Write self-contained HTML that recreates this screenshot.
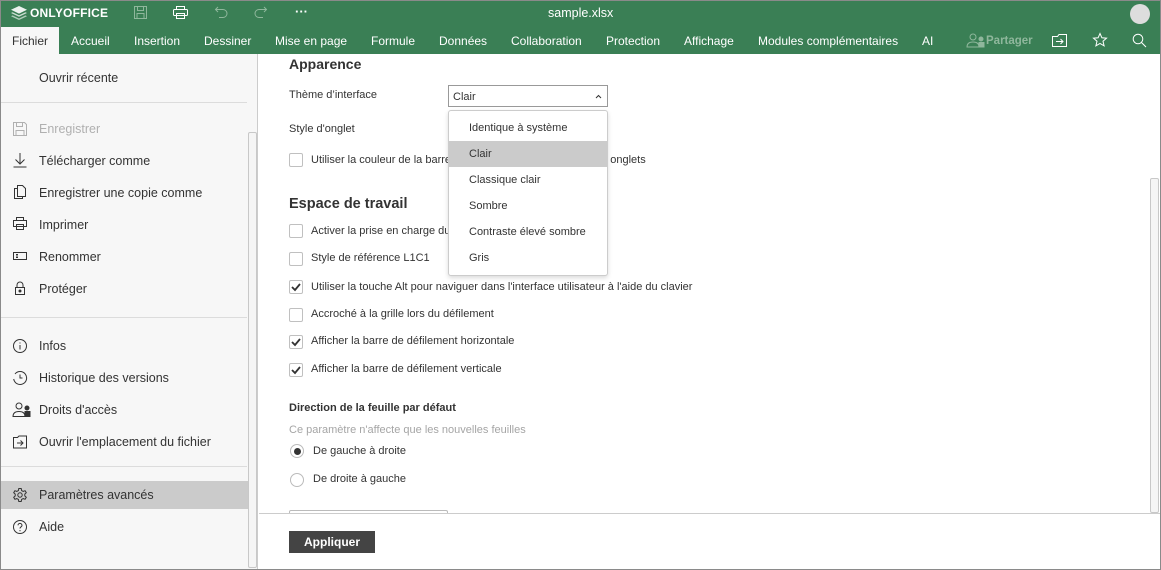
<!DOCTYPE html>
<html><head><meta charset="utf-8"><style>
*{margin:0;padding:0;box-sizing:border-box}
body{width:1161px;height:570px;overflow:hidden;font-family:"Liberation Sans",Arial,sans-serif;font-size:12px;color:#333;background:#fff;position:relative}
.a{position:absolute;white-space:nowrap}
.hdr{left:0;top:0;width:1161px;height:54px;background:#3a7f55}
.tab{top:28px;height:27px;line-height:26px;color:#fff;font-size:12px}
.side{left:1px;top:54px;width:257px;height:515px;background:#f7f7f7;border-right:1px solid #ccc}
.si{left:39px;font-size:12.5px;color:#333}
.ic{left:12px;width:16px;height:16px}
.hr{left:1px;width:246px;height:1px;background:#dcdcdc}
.cb{left:289px;width:14px;height:14px;border:1px solid #c0c0c0;border-radius:2px;background:#fff}
.lbl{left:311px;font-size:11px}
.dd{font-size:11px;left:469px}
</style></head><body>
<div class="a hdr"></div>
<div class="a" style="left:0;top:0;width:1161px;height:570px;border:1px solid #8a8a8a;pointer-events:none;z-index:9"></div>
<svg class="a" style="left:11px;top:6px" width="16" height="15" viewBox="0 0 16 15"><path d="M8 0L16 3.8 8 7.6 0 3.8Z" fill="#fff" opacity=".9"/><path d="M1.5 6.2L8 9.3 14.5 6.2 16 7 8 10.8 0 7Z" fill="#fff" opacity=".75"/><path d="M1.5 9.4L8 12.5 14.5 9.4 16 10.2 8 14 0 10.2Z" fill="#fff" opacity=".6"/></svg>
<div class="a" style="left:30px;top:6px;color:#fff;font-weight:bold;font-size:12px;letter-spacing:.2px">ONLYOFFICE</div>
<svg class="a" style="left:133px;top:5px" width="15" height="15" viewBox="0 0 15 15" fill="none" stroke="#8fb79c"><rect x="1.5" y="1.5" width="12" height="12"/><rect x="4.5" y="1.5" width="6" height="4"/><rect x="4" y="8.5" width="7" height="5"/></svg>
<svg class="a" style="left:172px;top:5px" width="17" height="15" viewBox="0 0 17 15" fill="none" stroke="#fff"><rect x="4.5" y="1.5" width="8" height="3"/><rect x="1.5" y="4.5" width="14" height="6" rx="1"/><rect x="4.5" y="8.5" width="8" height="5"/></svg>
<svg class="a" style="left:214px;top:5px" width="15" height="15" viewBox="0 0 15 15" fill="none" stroke="#8fb79c"><path d="M4 2L1.5 4.5 4 7M1.5 4.5H9a4 4 0 010 8H5"/></svg>
<svg class="a" style="left:253px;top:5px" width="15" height="15" viewBox="0 0 15 15" fill="none" stroke="#8fb79c"><path d="M11 2l2.5 2.5L11 7M13.5 4.5H6a4 4 0 000 8h4"/></svg>
<div class="a" style="left:295px;top:4px;color:#fff;font-size:13px;font-weight:bold">···</div>
<div class="a" style="left:548px;top:6px;color:#fff;font-size:12.5px">sample.xlsx</div>
<div class="a" style="left:1130px;top:4px;width:20px;height:20px;border-radius:50%;background:#ddd"></div>
<div class="a" style="left:1px;top:27px;width:58px;height:27px;background:#f7f7f7"></div>
<div class="a tab" style="left:12px;color:#333">Fichier</div>
<div class="a tab" style="left:71px">Accueil</div>
<div class="a tab" style="left:134px">Insertion</div>
<div class="a tab" style="left:204px">Dessiner</div>
<div class="a tab" style="left:275px">Mise en page</div>
<div class="a tab" style="left:371px">Formule</div>
<div class="a tab" style="left:439px">Données</div>
<div class="a tab" style="left:511px">Collaboration</div>
<div class="a tab" style="left:606px">Protection</div>
<div class="a tab" style="left:684px">Affichage</div>
<div class="a tab" style="left:758px">Modules complémentaires</div>
<div class="a tab" style="left:922px">AI</div>
<svg class="a" style="left:966px;top:33px" width="20" height="15" viewBox="0 0 20 15" fill="none" stroke="#8fb79c"><circle cx="7" cy="4" r="3"/><path d="M1 14c0-4 3-5 6-5s6 1 6 5z"/><circle cx="15" cy="6" r="2" fill="#8fb79c"/><rect x="13" y="9.5" width="5" height="4.5" fill="#8fb79c"/></svg>
<div class="a tab" style="left:986px;color:#8fb79c;font-weight:bold;font-size:11.5px">Partager</div>
<svg class="a" style="left:1051px;top:33px" width="17" height="15" viewBox="0 0 17 15" fill="none" stroke="#fff"><path d="M1.5 3.5h5l1.5-2h7.5v12h-14z"/><path d="M5 8.5h7M9.5 6l2.5 2.5L9.5 11"/></svg>
<svg class="a" style="left:1092px;top:32px" width="16" height="16" viewBox="0 0 16 16" fill="none" stroke="#fff"><path d="M8 1.5l1.9 4.3 4.6.4-3.5 3 1.1 4.6L8 11.4l-4.1 2.4 1.1-4.6-3.5-3 4.6-.4z"/></svg>
<svg class="a" style="left:1132px;top:33px" width="15" height="15" viewBox="0 0 15 15" fill="none" stroke="#fff"><circle cx="6" cy="6" r="4.8"/><path d="M9.5 9.5l4.5 4.5"/></svg>

<div class="a side"></div>
<div class="a" style="left:248px;top:132px;width:9px;height:436px;border:1px solid #c8c8c8;border-radius:2px;background:#f5f5f5"></div>
<div class="a si" style="top:71px">Ouvrir récente</div>
<div class="a hr" style="top:102px"></div>
<div class="a si" style="top:122px;color:#b0b0b0">Enregistrer</div>
<svg class="a ic" style="top:121px" viewBox="0 0 16 16" fill="none" stroke="#b0b0b0"><path d="M1.5 1.5h11l2 2v11h-13z"/><rect x="4.5" y="1.5" width="6" height="4"/><rect x="4" y="9.5" width="8" height="5"/></svg>
<div class="a si" style="top:154px">Télécharger comme</div>
<svg class="a ic" style="top:152px" viewBox="0 0 16 16" fill="none" stroke="#333"><path d="M8 1v11M3.5 7.5L8 12l4.5-4.5M1.5 15h13"/></svg>
<div class="a si" style="top:186px">Enregistrer une copie comme</div>
<svg class="a ic" style="top:184px" viewBox="0 0 16 16" fill="none" stroke="#333"><path d="M5.5 1.5h5l3 3v8h-8z"/><path d="M5.5 4.5h-3v10h8v-2"/></svg>
<div class="a si" style="top:218px">Imprimer</div>
<svg class="a ic" style="top:216px" viewBox="0 0 16 16" fill="none" stroke="#333"><rect x="4.5" y="1.5" width="7" height="3"/><rect x="1.5" y="4.5" width="13" height="6"/><rect x="4.5" y="8.5" width="7" height="5"/></svg>
<div class="a si" style="top:250px">Renommer</div>
<svg class="a ic" style="top:248px" viewBox="0 0 16 16" fill="none" stroke="#333"><rect x="1.5" y="4.5" width="13" height="7"/><path d="M4 6.5h2M5 6.5v3M4 9.5h2"/></svg>
<div class="a si" style="top:282px">Protéger</div>
<svg class="a ic" style="top:280px" viewBox="0 0 16 16" fill="none" stroke="#333"><path d="M5 7V5a3 3 0 016 0v2"/><rect x="3.5" y="7.5" width="9" height="7"/><circle cx="8" cy="11" r="1" fill="#333"/></svg>
<div class="a hr" style="top:317px"></div>
<div class="a si" style="top:339px">Infos</div>
<svg class="a ic" style="top:338px" viewBox="0 0 16 16" fill="none" stroke="#333"><circle cx="8" cy="8" r="6.5"/><path d="M8 7v4.5M8 4.5v1"/></svg>
<div class="a si" style="top:371px">Historique des versions</div>
<svg class="a ic" style="top:370px" viewBox="0 0 16 16" fill="none" stroke="#333"><path d="M3 4a6.5 6.5 0 11-1.3 5"/><path d="M8 4.5V8h2.5"/></svg>
<div class="a si" style="top:403px">Droits d'accès</div>
<svg class="a ic" style="top:402px;width:20px" viewBox="0 0 20 16" fill="none" stroke="#333"><circle cx="7" cy="4" r="3"/><path d="M1 14.5c0-4 3-5 6-5s6 1 6 5z"/><circle cx="15" cy="6" r="2" fill="#333"/><rect x="13" y="9.5" width="5" height="5" fill="#333"/></svg>
<div class="a si" style="top:435px">Ouvrir l'emplacement du fichier</div>
<svg class="a ic" style="top:434px" viewBox="0 0 16 16" fill="none" stroke="#333"><path d="M1.5 3.5h4l1.5-1.5h7.5v12h-13z"/><path d="M5 9h6M8.5 6.5L11 9l-2.5 2.5"/></svg>
<div class="a hr" style="top:466px"></div>
<div class="a" style="left:1px;top:481px;width:247px;height:28px;background:#cbcbcb"></div>
<div class="a si" style="top:488px">Paramètres avancés</div>
<svg class="a ic" style="top:487px" viewBox="0 0 16 16" fill="none" stroke="#333"><circle cx="8" cy="8" r="2.2"/><path d="M6.8 1.5h2.4l.4 2 1.6.9 1.9-.7 1.2 2-1.5 1.4v1.8l1.5 1.4-1.2 2-1.9-.7-1.6.9-.4 2H6.8l-.4-2-1.6-.9-1.9.7-1.2-2 1.5-1.4V7.1L1.7 5.7l1.2-2 1.9.7 1.6-.9z"/></svg>
<div class="a si" style="top:520px">Aide</div>
<svg class="a ic" style="top:519px" viewBox="0 0 16 16" fill="none" stroke="#333"><circle cx="8" cy="8" r="6.5"/><path d="M6 6.3a2 2 0 114 .2c0 1.3-2 1.4-2 3M8 11v1.2"/></svg>

<div class="a" style="left:289px;top:56px;font-weight:bold;font-size:14px;color:#333">Apparence</div>
<div class="a lbl" style="left:289px;top:89px">Thème d’interface</div>
<div class="a" style="left:448px;top:85px;width:160px;height:22px;border:1px solid #999;background:#fff;font-size:11px;padding:5px 0 0 4px">Clair<svg style="position:absolute;right:5px;top:8px" width="7" height="5" viewBox="0 0 7 5" fill="none" stroke="#333"><path d="M1 4l2.5-2.5L6 4"/></svg></div>
<div class="a lbl" style="left:289px;top:123px">Style d'onglet</div>
<div class="a cb" style="top:153px"></div>
<div class="a lbl" style="top:154px">Utiliser la couleur de la barre d'outils comme arrière-plan des onglets</div>
<div class="a" style="left:289px;top:196px;font-weight:bold;font-size:14.5px">Espace de travail</div>
<div class="a cb" style="top:224px"></div><div class="a lbl" style="top:225px">Activer la prise en charge du mode sombre</div>
<div class="a cb" style="top:252px"></div><div class="a lbl" style="top:252px">Style de référence L1C1</div>
<div class="a cb" style="top:280px"></div><div class="a lbl" style="top:281px">Utiliser la touche Alt pour naviguer dans l'interface utilisateur à l'aide du clavier</div>
<div class="a cb" style="top:308px"></div><div class="a lbl" style="top:308px">Accroché à la grille lors du défilement</div>
<div class="a cb" style="top:335px"></div><div class="a lbl" style="top:335px">Afficher la barre de défilement horizontale</div>
<div class="a cb" style="top:363px"></div><div class="a lbl" style="top:363px">Afficher la barre de défilement verticale</div>
<svg class="a" style="left:291px;top:282px" width="10" height="10" viewBox="0 0 10 10" fill="none" stroke="#333" stroke-width="1.8"><path d="M1 5l3 3 5-6"/></svg>
<svg class="a" style="left:291px;top:337px" width="10" height="10" viewBox="0 0 10 10" fill="none" stroke="#333" stroke-width="1.8"><path d="M1 5l3 3 5-6"/></svg>
<svg class="a" style="left:291px;top:365px" width="10" height="10" viewBox="0 0 10 10" fill="none" stroke="#333" stroke-width="1.8"><path d="M1 5l3 3 5-6"/></svg>
<div class="a" style="left:289px;top:402px;font-weight:bold;font-size:11px">Direction de la feuille par défaut</div>
<div class="a" style="left:289px;top:424px;font-size:11px;color:#a5a5a5">Ce paramètre n'affecte que les nouvelles feuilles</div>
<div class="a" style="left:290px;top:444px;width:14px;height:14px;border:1px solid #bbb;border-radius:50%;background:#fff"><div style="position:absolute;left:2.5px;top:2.5px;width:7px;height:7px;border-radius:50%;background:#333"></div></div>
<div class="a lbl" style="left:313px;top:445px">De gauche à droite</div>
<div class="a" style="left:290px;top:473px;width:14px;height:14px;border:1px solid #bbb;border-radius:50%;background:#fff"></div>
<div class="a lbl" style="left:313px;top:473px">De droite à gauche</div>
<div class="a" style="left:289px;top:510px;width:159px;height:4px;border:1px solid #bbb;border-bottom:none;border-radius:2px 2px 0 0"></div>
<div class="a" style="left:259px;top:513px;width:902px;height:1px;background:#ccc"></div>
<div class="a" style="left:259px;top:514px;width:901px;height:55px;background:#fff"></div>
<div class="a" style="left:289px;top:531px;width:86px;height:22px;background:#444;color:#fff;font-weight:bold;font-size:12px;text-align:center;line-height:22px">Appliquer</div>
<div class="a" style="left:1150px;top:178px;width:9px;height:335px;border:1px solid #c8c8c8;border-radius:2px;background:#f5f5f5"></div>

<div class="a" style="left:448px;top:110px;width:160px;height:166px;border:1px solid #ccc;border-radius:3px;background:#fff;box-shadow:0 2px 5px rgba(0,0,0,.15)"></div>
<div class="a" style="left:449px;top:141px;width:158px;height:26px;background:#cbcbcb"></div>
<div class="a dd" style="top:122px">Identique à système</div>
<div class="a dd" style="top:148px">Clair</div>
<div class="a dd" style="top:174px">Classique clair</div>
<div class="a dd" style="top:200px">Sombre</div>
<div class="a dd" style="top:226px">Contraste élevé sombre</div>
<div class="a dd" style="top:252px">Gris</div>
</body></html>
